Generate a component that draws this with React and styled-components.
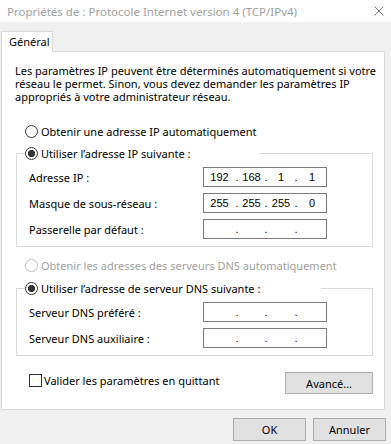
import styled, { createGlobalStyle } from "styled-components";

const GlobalStyle = createGlobalStyle`
  body {
    margin: 0;
    background: #f0f0f0;
    font-family: "Noto Sans", "Open Sans", sans-serif;
    font-size: 11px;
    color: #000;
  }
`;

const ipFields = [
  { label: "Adresse IP :", value: ["192", "168", "1", "1"] },
  { label: "Masque de sous-réseau :", value: ["255", "255", "255", "0"] },
  { label: "Passerelle par défaut :", value: ["", "", "", ""] },
];

const dnsFields = [
  { label: "Serveur DNS préféré :", value: ["", "", "", ""] },
  { label: "Serveur DNS auxiliaire :", value: ["", "", "", ""] },
];

function IpBox({ value }) {
  return (
    <IpField>
      <Octet>{value[0]}</Octet>
      <Dot>.</Dot>
      <Octet>{value[1]}</Octet>
      <Dot>.</Dot>
      <Octet>{value[2]}</Octet>
      <Dot>.</Dot>
      <Octet>{value[3]}</Octet>
    </IpField>
  );
}

function Radio({ checked, disabled, children }) {
  return (
    <RadioRow $disabled={disabled}>
      <RadioCircle $checked={checked} $disabled={disabled} />
      {children}
    </RadioRow>
  );
}

export default function App() {
  return (
    <>
      <GlobalStyle />
      <Window>
        <TitleBar>
          <Title>Propriétés de : Protocole Internet version 4 (TCP/IPv4)</Title>
          <svg width="10" height="10" viewBox="0 0 10 10">
            <path d="M0.5 0.5 L9.5 9.5 M9.5 0.5 L0.5 9.5" stroke="#7a7a7a" strokeWidth="1" />
          </svg>
        </TitleBar>
        <Body>
          <TabStrip>
            <Tab>Général</Tab>
          </TabStrip>
          <Panel>
            <Description>
              <span>Les paramètres IP peuvent être déterminés automatiquement si votre</span>
              <span>réseau le permet. Sinon, vous devez demander les paramètres IP</span>
              <span>appropriés à votre administrateur réseau.</span>
            </Description>

            <OptionLine $gap={21}>
              <Radio>Obtenir une adresse IP automatiquement</Radio>
            </OptionLine>

            <Group $gap={8}>
              <Legend $width={234}>
                <Radio checked>Utiliser l’adresse IP suivante :</Radio>
              </Legend>
              <FieldGrid>
                {ipFields.map((f) => (
                  <FieldRow key={f.label}>
                    <FieldLabel>{f.label}</FieldLabel>
                    <IpBox value={f.value} />
                  </FieldRow>
                ))}
              </FieldGrid>
            </Group>

            <OptionLine $gap={11}>
              <Radio disabled>Obtenir les adresses des serveurs DNS automatiquement</Radio>
            </OptionLine>

            <Group $gap={9}>
              <Legend $width={296}>
                <Radio checked>Utiliser l’adresse de serveur DNS suivante :</Radio>
              </Legend>
              <FieldGrid>
                {dnsFields.map((f) => (
                  <FieldRow key={f.label}>
                    <FieldLabel>{f.label}</FieldLabel>
                    <IpBox value={f.value} />
                  </FieldRow>
                ))}
              </FieldGrid>
            </Group>

            <PanelFooter>
              <CheckRow>
                <CheckBox />
                Valider les paramètres en quittant
              </CheckRow>
              <Button $width={88} $height={22}>Avancé…</Button>
            </PanelFooter>
          </Panel>
          <DialogButtons>
            <Button $width={73} $height={23}>OK</Button>
            <Button $width={73} $height={23}>Annuler</Button>
          </DialogButtons>
        </Body>
      </Window>
    </>
  );
}

const Window = styled.div`
  width: 391px;
  height: 444px;
  display: flex;
  flex-direction: column;
  background: #f0f0f0;
  overflow: hidden;
`;

const TitleBar = styled.div`
  height: 22px;
  flex-shrink: 0;
  background: #fff;
  display: flex;
  align-items: center;
  justify-content: space-between;
  padding: 0 7px 0 7px;
  box-sizing: border-box;
`;

const Title = styled.span`
  color: #a0a0a0;
  font-size: 11.5px;
`;

const Body = styled.div`
  padding: 9px 0 0 1px;
  display: flex;
  flex-direction: column;
`;

const TabStrip = styled.div`
  display: flex;
  height: 20px;
`;

const Tab = styled.div`
  position: relative;
  z-index: 1;
  width: 52px;
  height: 21px;
  box-sizing: border-box;
  border: 1px solid #d9d9d9;
  border-bottom: none;
  background: #fff;
  padding: 2px 0 0 7px;
`;

const Panel = styled.div`
  width: 384px;
  height: 359px;
  box-sizing: border-box;
  border: 1px solid #d9d9d9;
  background: #fff;
  padding-top: 12px;
  display: flex;
  flex-direction: column;
`;

const Description = styled.p`
  margin: 0 0 0 13px;
  line-height: 13px;
  display: flex;
  flex-direction: column;
  white-space: nowrap;
`;

const OptionLine = styled.div`
  margin: ${(p) => p.$gap}px 0 0 23px;
`;

const RadioRow = styled.div`
  display: flex;
  align-items: center;
  gap: 3px;
  height: 14px;
  white-space: nowrap;
  color: ${(p) => (p.$disabled ? "#a0a0a0" : "#000")};
`;

const RadioCircle = styled.span`
  width: 13px;
  height: 13px;
  flex-shrink: 0;
  box-sizing: border-box;
  border-radius: 50%;
  border: 1px solid ${(p) => (p.$disabled ? "#bcbcbc" : "#333")};
  background: ${(p) =>
    p.$checked
      ? "radial-gradient(circle, #333 0 3.3px, #fff 3.9px)"
      : "#fff"};
`;

const Group = styled.fieldset`
  margin: ${(p) => p.$gap}px 0 0 14px;
  width: 357px;
  box-sizing: border-box;
  border: 1px solid #dcdcdc;
  padding: 7px 0 7px 12px;
  min-inline-size: 0;
`;

const Legend = styled.legend`
  padding: 0;
  margin-left: -4px;
  width: ${(p) => p.$width}px;
`;

const FieldGrid = styled.div`
  display: flex;
  flex-direction: column;
  gap: 6px;
`;

const FieldRow = styled.div`
  display: grid;
  grid-template-columns: 174px 124px;
  align-items: center;
`;

const FieldLabel = styled.span`
  white-space: nowrap;
`;

const IpField = styled.div`
  width: 124px;
  height: 20px;
  box-sizing: border-box;
  border: 1px solid #7a7a7a;
  background: #fff;
  display: grid;
  grid-template-columns: 31px 4px 25px 4px 26px 4px 1fr;
  align-items: center;
  font-family: "Liberation Sans", Arial, sans-serif;
  font-size: 11px;
`;

const Octet = styled.span`
  text-align: center;
`;

const Dot = styled.span`
  text-align: center;
`;

const PanelFooter = styled.div`
  margin-top: 16px;
  padding: 0 11px 0 27px;
  display: flex;
  justify-content: space-between;
  align-items: flex-start;
`;

const CheckRow = styled.div`
  margin-top: 1px;
  display: flex;
  align-items: center;
  gap: 2px;
  white-space: nowrap;
`;

const CheckBox = styled.span`
  width: 13px;
  height: 13px;
  box-sizing: border-box;
  border: 1px solid #333;
  background: #fff;
`;

const Button = styled.button`
  width: ${(p) => p.$width}px;
  height: ${(p) => p.$height}px;
  box-sizing: border-box;
  border: 1px solid #adadad;
  background: #e1e1e1;
  font-family: "Noto Sans", "Open Sans", sans-serif;
  font-size: 11px;
  color: #000;
  padding: 0;
`;

const DialogButtons = styled.div`
  margin-top: 8px;
  padding-right: 5px;
  display: flex;
  justify-content: flex-end;
  gap: 7px;
`;
